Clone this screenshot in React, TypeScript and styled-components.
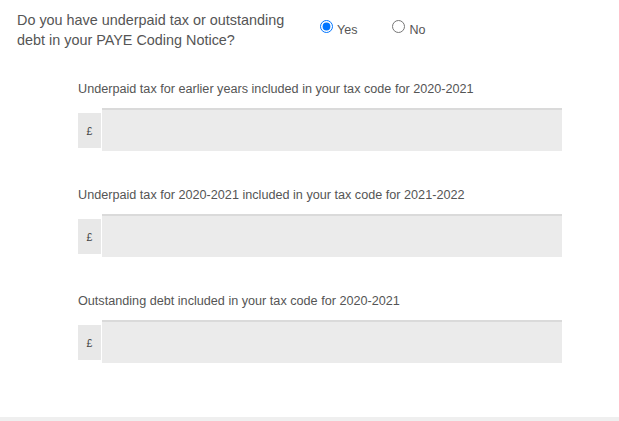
import React from 'react';
import styled, {createGlobalStyle} from 'styled-components';

const GlobalStyle = createGlobalStyle`
    html, body {
        margin: 0;
        padding: 0;
        background: #fff;
    }
    body {
        font-family: "Liberation Sans", Arial, sans-serif;
    }
`;

const Page = styled.div`
    width: 619px;
    height: 421px;
    display: flex;
    flex-direction: column;
    overflow: hidden;
`;

const Section = styled.div`
    flex: 1;
    padding: 10px 17px 0;
`;

const QuestionRow = styled.div`
    display: flex;
    align-items: flex-start;
`;

const Question = styled.p`
    width: 275px;
    margin: 0 28px 0 0;
    font-size: 14.4px;
    line-height: 20px;
    color: #555;
`;

const RadioGroup = styled.div`
    display: flex;
    gap: 35px;
    padding-top: 10px;
`;

const RadioLabel = styled.label`
    display: flex;
    align-items: flex-start;
    font-size: 12.5px;
    color: #555;
    cursor: pointer;
`;

const Radio = styled.input`
    width: 13px;
    height: 13px;
    margin: 0 4px 0 0;
    accent-color: #0075ff;
`;

const RadioText = styled.span`
    padding-top: 3px;
`;

const Fields = styled.div`
    width: 484px;
    margin: 30px 0 0 61px;
`;

const Field = styled.div`
    margin-bottom: 35px;
`;

const FieldLabel = styled.label`
    display: block;
    font-size: 12.65px;
    line-height: 18px;
    color: #555;
    margin-bottom: 10px;
`;

const InputGroup = styled.div`
    display: flex;
    align-items: flex-start;
    gap: 1px;
`;

const Addon = styled.span`
    width: 23px;
    height: 35px;
    margin-top: 5px;
    display: flex;
    align-items: center;
    justify-content: center;
    background: #e8e8e8;
    font-size: 10.5px;
    color: #444;
`;

const AmountInput = styled.input`
    flex: 1;
    height: 43px;
    box-sizing: border-box;
    border: none;
    border-top: 2px solid #dadada;
    background: #ebebeb;
    outline: none;
    padding: 0 10px;
    font-family: inherit;
    font-size: 13px;
`;

const Footer = styled.div`
    height: 4px;
    background: #efefef;
`;

const fields = [
    'Underpaid tax for earlier years included in your tax code for 2020-2021',
    'Underpaid tax for 2020-2021 included in your tax code for 2021-2022',
    'Outstanding debt included in your tax code for 2020-2021',
];

const App = () => (
    <Page>
        <GlobalStyle/>
        <Section>
            <QuestionRow>
                <Question>
                    {'Do you have underpaid tax or outstanding debt in your PAYE Coding Notice?'}
                </Question>
                <RadioGroup>
                    <RadioLabel>
                        <Radio
                            type='radio'
                            name='underpaid'
                            defaultChecked={true}
                        />
                        <RadioText>{'Yes'}</RadioText>
                    </RadioLabel>
                    <RadioLabel>
                        <Radio
                            type='radio'
                            name='underpaid'
                        />
                        <RadioText>{'No'}</RadioText>
                    </RadioLabel>
                </RadioGroup>
            </QuestionRow>

            <Fields>
                {fields.map((label, idx) => (
                    <Field key={label}>
                        <FieldLabel htmlFor={`amount-${idx}`}>{label}</FieldLabel>
                        <InputGroup>
                            <Addon>{'£'}</Addon>
                            <AmountInput
                                id={`amount-${idx}`}
                                type='text'
                            />
                        </InputGroup>
                    </Field>
                ))}
            </Fields>
        </Section>
        <Footer/>
    </Page>
);

export default App;
